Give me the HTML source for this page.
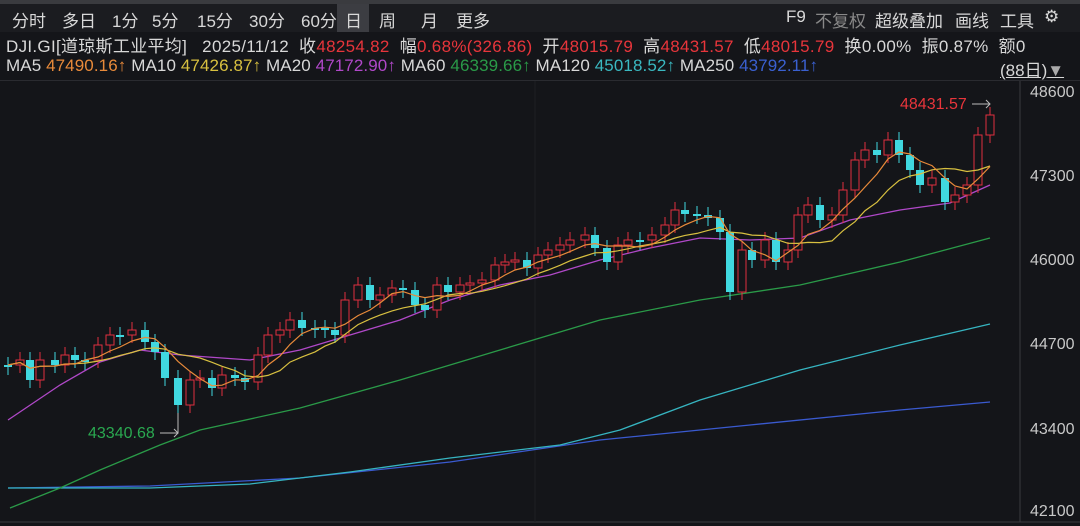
<!DOCTYPE html>
<html><head><meta charset="utf-8"><style>
body{margin:0;width:1080px;height:526px;background:#141519;overflow:hidden;font-family:"Liberation Sans","Noto Sans CJK SC",sans-serif;color:#d8d8d8;position:relative}
.top{position:absolute;left:0;top:0;width:1080px;height:4px;background:#3a3b3f}
.tabs{position:absolute;top:4px;left:0;height:28px;width:1080px;background:#1b1c20;font-size:17px}
.tabs span{position:absolute;top:3px}
.row{position:absolute;left:6px;font-size:17px;letter-spacing:0.3px;white-space:nowrap}
.r{color:#e8353b}
svg{position:absolute;left:0;top:0}
</style></head><body>
<div class="top"></div>
<div class="tabs">
<span style="left:12px">分时</span><span style="left:62px">多日</span><span style="left:112px">1分</span><span style="left:152px">5分</span><span style="left:197px">15分</span><span style="left:249px">30分</span><span style="left:301px">60分</span>
<div style="position:absolute;left:337px;top:0;width:32px;height:28px;background:#3c3d42"></div>
<span style="left:345px">日</span><span style="left:379px">周</span><span style="left:421px">月</span><span style="left:456px">更多</span>
<span style="left:786px">F9</span><span style="left:815px;color:#888">不复权</span><span style="left:875px">超级叠加</span><span style="left:955px">画线</span><span style="left:1000px">工具</span><span style="left:1044px">⚙</span>
</div>
<div class="row" style="top:32px">DJI.GI[道琼斯工业平均]&nbsp;&nbsp;&nbsp;2025/11/12&nbsp;&nbsp;收<span class="r">48254.82</span>&nbsp;&nbsp;幅<span class="r">0.68%(326.86)</span>&nbsp;&nbsp;开<span class="r">48015.79</span>&nbsp;&nbsp;高<span class="r">48431.57</span>&nbsp;&nbsp;低<span class="r">48015.79</span>&nbsp;&nbsp;换0.00%&nbsp;&nbsp;振0.87%&nbsp;&nbsp;额0</div>
<div class="row" style="top:56px;letter-spacing:0.1px">MA5 <span style="color:#e88a3a">47490.16↑</span> MA10 <span style="color:#d8c040">47426.87↑</span> MA20 <span style="color:#b048c8">47172.90↑</span> MA60 <span style="color:#2a9a48">46339.66↑</span> MA120 <span style="color:#3ab8c0">45018.52↑</span> MA250 <span style="color:#3a60d0">43792.11↑</span></div>
<div class="row" style="top:56px;left:1000px;text-decoration:underline;letter-spacing:0">(88日)<span style="color:#aaa">▼</span></div>
<div style="position:absolute;left:0;top:80px;width:1080px;height:1px;background:#2a2b30"></div>
<svg width="1080" height="526" id="s">
<line x1="1020" y1="81" x2="1020" y2="522" stroke="#3a3b40"/>
<line x1="0" y1="522" x2="1080" y2="522" stroke="#3a3b40"/>
<line x1="535" y1="81" x2="535" y2="522" stroke="#1e1f24"/>
<g fill="#c8c8c8" font-size="16" font-family="Liberation Sans">
<text x="1030" y="97">48600</text><text x="1030" y="181">47300</text><text x="1030" y="265">46000</text><text x="1030" y="349">44700</text><text x="1030" y="434">43400</text><text x="1030" y="516">42100</text></g>
<text x="900" y="109" fill="#e8353b" font-size="16" font-family="Liberation Sans">48431.57</text>
<path d="M972 104H990M986 100L990 104L986 108" stroke="#bbb" fill="none"/>
<text x="88" y="438" fill="#2aa850" font-size="16" font-family="Liberation Sans">43340.68</text>
<path d="M160 433H178V408M174 429L178 433L174 437" stroke="#bbb" fill="none"/>
<polyline fill="none" stroke="#3a5ad0" stroke-width="1.3" points="8,488 150,486 300,478 450,462 600,440 750,425 900,410 990,402"/>
<polyline fill="none" stroke="#36b4c0" stroke-width="1.3" points="8,488 150,488 250,484 350,472 450,458 560,445 620,430 700,400 800,370 900,345 990,324"/>
<polyline fill="none" stroke="#2a9a48" stroke-width="1.3" points="10,508 60,488 100,470 160,445 200,430 300,408 400,380 500,350 600,320 700,300 800,285 900,262 990,238"/>
<polyline fill="none" stroke="#b048c8" stroke-width="1.3" points="8,420 60,385 100,362 140,350 180,355 250,360 300,350 350,335 400,320 450,300 500,285 550,275 600,260 650,248 700,238 750,240 800,238 850,220 900,210 950,203 990,185"/>
<g id="c"></g>
<polyline id="m10" fill="none" stroke="#d8c040" stroke-width="1.2"/>
<polyline id="m5" fill="none" stroke="#e88a3a" stroke-width="1.2"/>
</svg>
<script>
var d=[[8,365],[20,360],[30,380],[40,360],[55,365],[65,355],[75,360],[85,360],[98,345],[110,335],[120,335],[132,330],[145,342],[155,352],[165,378],[178,405],[190,380],[200,378],[212,388],[222,375],[235,378],[245,382],[258,355],[268,335],[280,330],[290,320],[302,328],[315,328],[325,330],[335,335],[345,300],[358,285],[370,300],[380,295],[392,288],[403,290],[415,305],[425,310],[437,285],[448,292],[460,285],[470,283],[482,280],[495,265],[505,262],[515,260],[527,268],[538,255],[548,250],[560,245],[570,240],[585,235],[595,248],[607,262],[618,245],[628,240],[640,240],[652,235],[665,225],[675,210],[685,214],[697,215],[708,218],[720,232],[730,292],[742,250],[752,260],[765,240],[776,262],[788,250],[798,215],[808,205],[820,220],[832,215],[843,190],[855,160],[865,150],[877,155],[888,140],[899,155],[910,170],[920,185],[932,178],[945,202],[955,195],[967,185],[978,135],[990,115]];
var g=document.getElementById('c'),h='',m5=[],m10=[];
for(var i=0;i<d.length;i++){var x=d[i][0],c=d[i][1],o=i?d[i-1][1]:c;var up=c<o;var col=up?'#e03040':'#40d8e0';var t=Math.min(o,c),b=Math.max(o,c);if(b-t<2){b=t+2;}
h+='<line x1="'+x+'" x2="'+x+'" y1="'+(t-8)+'" y2="'+(b+8)+'" stroke="'+col+'"/>';
h+='<rect x="'+(x-4)+'" y="'+t+'" width="8" height="'+(b-t)+'" '+(up?'fill="#141519" stroke="'+col+'"':'fill="'+col+'"')+'/>';
function av(n){var s=0,k=0;for(var j=Math.max(0,i-n+1);j<=i;j++){s+=d[j][1];k++;}return s/k;}
m5.push(x+','+av(5).toFixed(1));m10.push(x+','+av(10).toFixed(1));}
g.innerHTML=h;
document.getElementById('m5').setAttribute('points',m5.join(' '));
document.getElementById('m10').setAttribute('points',m10.join(' '));
</script>
</body></html>
